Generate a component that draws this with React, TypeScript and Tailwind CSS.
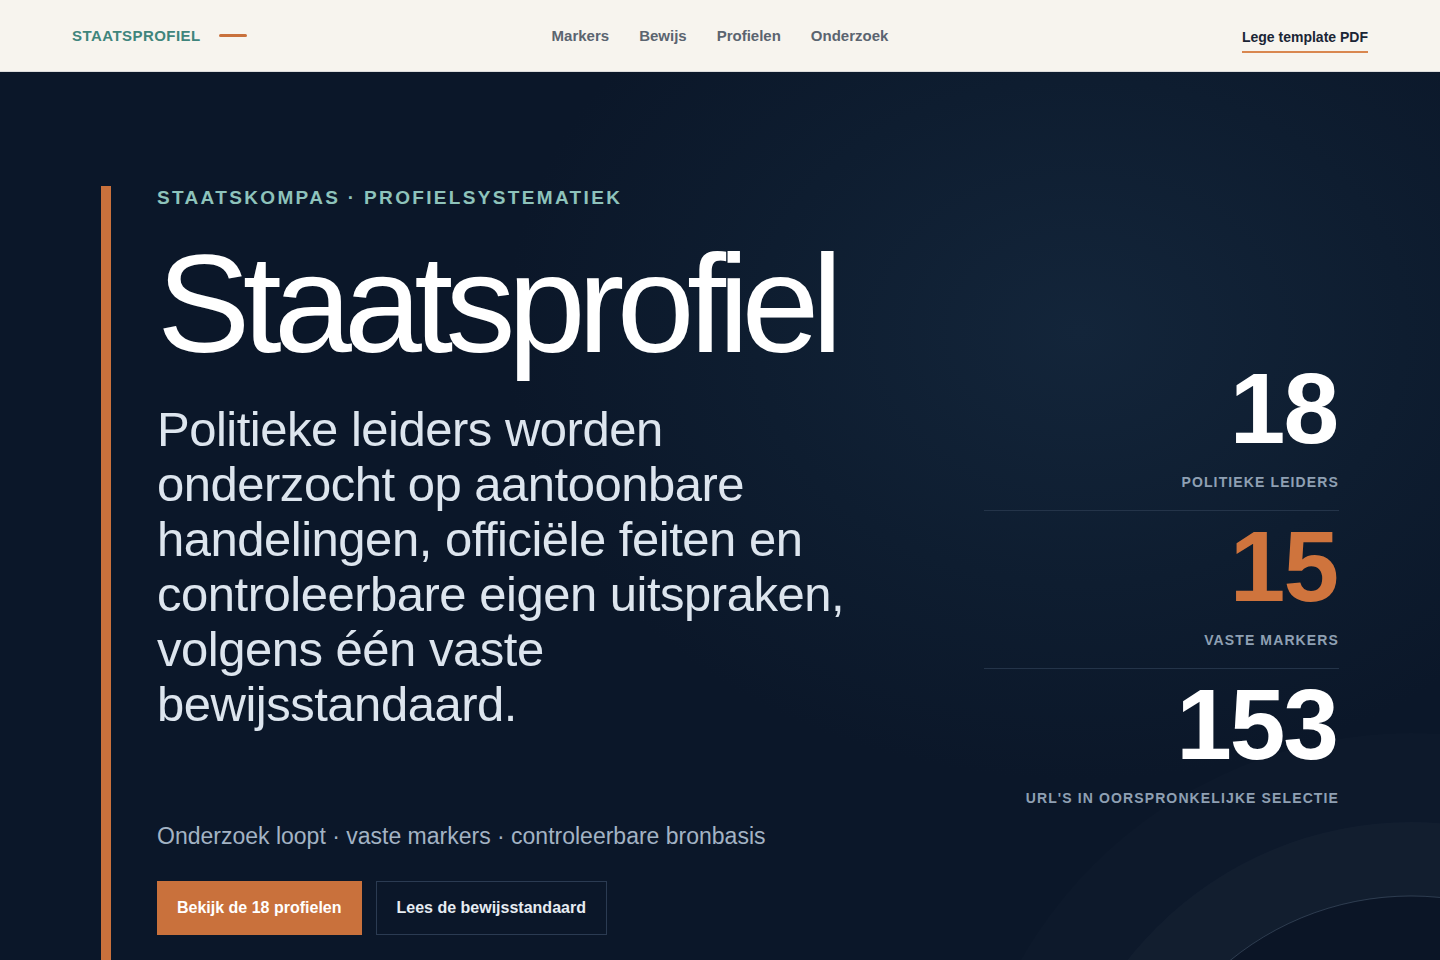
import { ReactNode } from 'react';

const stats = [
  { value: '18', label: 'Politieke leiders', accent: false },
  { value: '15', label: 'Vaste markers', accent: true },
  { value: '153', label: "URL's in oorspronkelijke selectie", accent: false },
];

function NavLink({ children }: { children: ReactNode }) {
  return (
    <a href="#" className="text-[15px] font-bold leading-[20px] text-[#5b6470]">
      {children}
    </a>
  );
}

export default function App() {
  return (
    <div className="min-h-screen bg-[#0b1729] font-['Liberation_Sans',Arial,sans-serif]">
      <header className="grid h-[72px] grid-cols-[1fr_auto_1fr] items-center border-b border-[#dcdcdc] bg-[#f7f4ee] px-[72px]">
        <div className="flex items-center gap-[18px]">
          <span className="text-[15px] font-bold leading-[20px] tracking-[0.03em] text-[#3f857c]">STAATSPROFIEL</span>
          <span className="h-[3px] w-[28px] rounded-full bg-[#c9713c]" />
        </div>
        <nav className="flex items-center gap-[30px]">
          <NavLink>Markers</NavLink>
          <NavLink>Bewijs</NavLink>
          <NavLink>Profielen</NavLink>
          <NavLink>Onderzoek</NavLink>
        </nav>
        <div className="justify-self-end">
          <a
            href="#"
            className="mt-[8px] inline-block border-b-2 border-[#d9874f] pb-[4px] text-[14px] font-bold leading-[20px] text-[#1b2535]"
          >
            Lege template PDF
          </a>
        </div>
      </header>

      <section className="relative overflow-hidden bg-[radial-gradient(ellipse_720px_560px_at_1080px_260px,#13253a_0%,#0e1d30_45%,#0b1729_80%)]">
        {/* decorative rings bottom right */}
        <svg
          className="pointer-events-none absolute left-[961px] top-[660px]"
          width="900"
          height="900"
          viewBox="0 0 900 900"
        >
          <circle cx="450" cy="450" r="449" fill="rgba(255,255,255,0.012)" />
          <circle cx="450" cy="450" r="360" fill="rgba(255,255,255,0.022)" />
          <circle cx="450" cy="450" r="286" fill="#0b1526" stroke="rgba(160,185,215,0.22)" strokeWidth="1" />
        </svg>

        <div className="relative flex items-start px-[101px] pt-[114px]">
          <div className="flex-1 border-l-[10px] border-[#c9713c] pb-[40px] pl-[46px]">
            <p className="text-[19px] font-bold leading-[24px] tracking-[0.123em] text-[#8ec3bb]">
              STAATSKOMPAS · PROFIELSYSTEMATIEK
            </p>
            <h1 className="mt-[24px] text-[140px] font-normal leading-none tracking-[-0.055em] text-white">
              Staatsprofiel
            </h1>
            <p className="mt-[28px] max-w-[710px] text-[49px] leading-[55px] tracking-[-0.01em] text-[#dde5ee]">
              Politieke leiders worden onderzocht op aantoonbare handelingen, officiële feiten en controleerbare eigen
              uitspraken, volgens één vaste bewijsstandaard.
            </p>
            <p className="mt-[88px] text-[23px] leading-[32px] text-[#a3b3c4]">
              Onderzoek loopt · vaste markers · controleerbare bronbasis
            </p>
            <div className="mt-[29px] flex gap-[14px]">
              <a
                href="#"
                className="border border-[#c9713c] bg-[#c9713c] px-[19px] py-[15px] text-[16px] font-bold leading-[22px] text-white"
              >
                Bekijk de 18 profielen
              </a>
              <a
                href="#"
                className="border border-[#2b3b52] px-[20px] py-[15px] text-[16px] font-bold leading-[22px] text-[#e6ecf2]"
              >
                Lees de bewijsstandaard
              </a>
            </div>
          </div>

          <div className="mt-[167px] w-[355px]">
            {stats.map((s, i) => (
              <div
                key={s.value}
                className={
                  i < stats.length - 1
                    ? 'border-b border-[#243449] pb-[18px] pt-[5px] text-right'
                    : 'pb-[18px] pt-[5px] text-right'
                }
              >
                <div
                  className={
                    s.accent
                      ? 'pr-[2px] text-[100px] font-bold leading-none tracking-[-0.02em] text-[#cf743d]'
                      : 'pr-[2px] text-[100px] font-bold leading-none tracking-[-0.02em] text-white'
                  }
                >
                  {s.value}
                </div>
                <div className="mt-[14px] text-[14px] font-bold uppercase leading-[20px] tracking-[0.08em] text-[#8fa0b3]">
                  {s.label}
                </div>
              </div>
            ))}
          </div>
        </div>
      </section>
    </div>
  );
}
